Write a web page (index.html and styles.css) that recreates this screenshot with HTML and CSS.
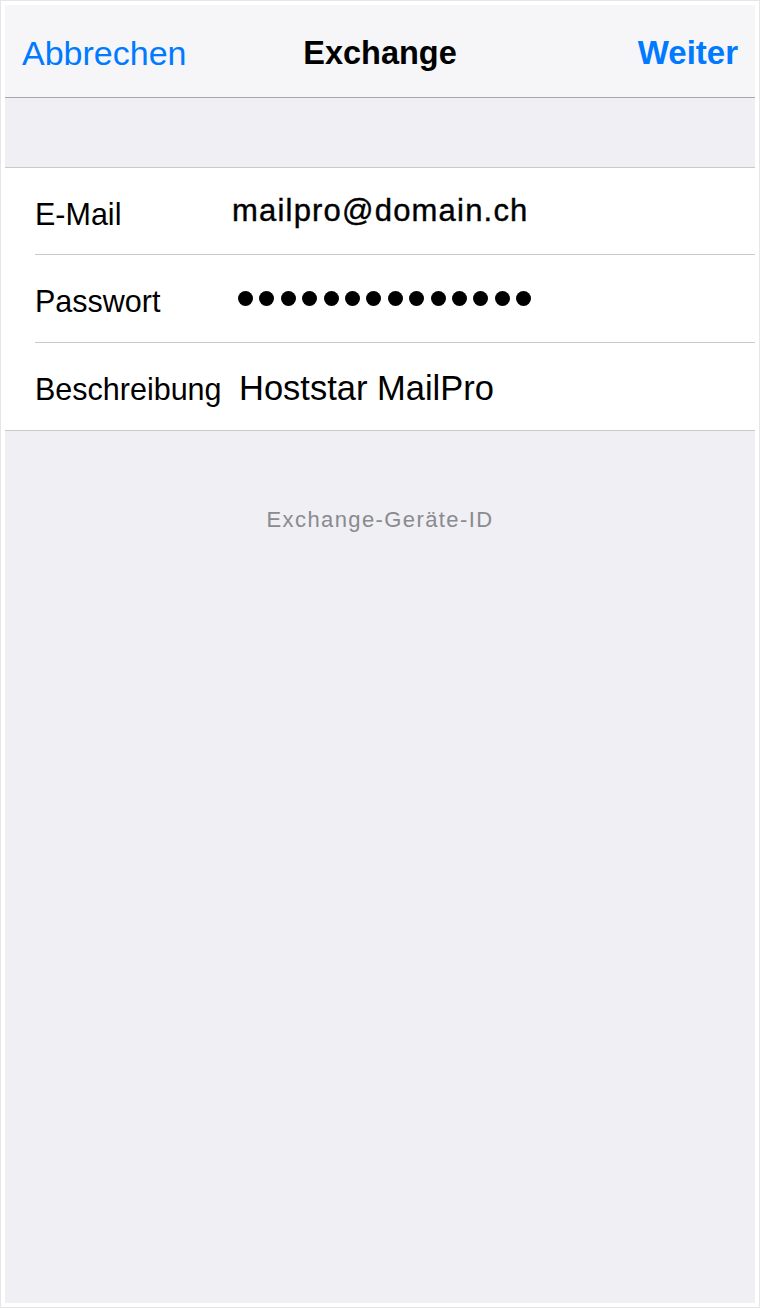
FILE: index.html
```html
<!DOCTYPE html>
<html lang="de">

<head>
    <meta charset="UTF-8">
    <meta name="viewport" content="width=device-width, initial-scale=1.0">
    <title>Exchange</title>
    <link rel="stylesheet" href="styles.css">
</head>

<body>

    <div class="frame">
        <div class="screen">

            <div class="navbar">
                <span class="nav-button">Abbrechen</span>
                <span class="nav-title">Exchange</span>
                <span class="nav-button nav-button-bold">Weiter</span>
            </div>

            <div class="spacer"></div>

            <div class="form">
                <div class="form-row">
                    <div class="form-row-inner">
                        <span class="label">E-Mail</span>
                        <span class="value value-mail">mailpro@domain.ch</span>
                    </div>
                </div>
                <div class="form-row">
                    <div class="form-row-inner">
                        <span class="label">Passwort</span>
                        <span class="value value-password">
                            <span class="dot"></span><span class="dot"></span><span class="dot"></span><span class="dot"></span><span class="dot"></span><span class="dot"></span><span class="dot"></span><span class="dot"></span><span class="dot"></span><span class="dot"></span><span class="dot"></span><span class="dot"></span><span class="dot"></span><span class="dot"></span>
                        </span>
                    </div>
                </div>
                <div class="form-row">
                    <div class="form-row-inner">
                        <span class="label">Beschreibung</span>
                        <span class="value value-large">Hoststar MailPro</span>
                    </div>
                </div>
            </div>

            <p class="footer-note">Exchange-Geräte-ID</p>

        </div>
    </div>

</body>

</html>
```

FILE: styles.css
```css
* {
    box-sizing: border-box;
}

body {
    font-family: 'Liberation Sans', Arial, sans-serif;
    margin: 0;
    padding: 0;
    background-color: #fff;
    color: #000;
}

.frame {
    width: 760px;
    height: 1308px;
    border: 1px solid #e6e6e6;
    padding: 4px;
    background-color: #fff;
}

.screen {
    height: 100%;
    background-color: #efeff4;
    display: flex;
    flex-direction: column;
}

/* top bar */
.navbar {
    height: 93px;
    padding: 4px 17px 0;
    background-color: #f6f6f8;
    border-bottom: 1px solid #a8a8ab;
    display: grid;
    grid-template-columns: 1fr auto 1fr;
    align-items: center;
}

.nav-button {
    font-size: 34px;
    color: #007aff;
}

.nav-button-bold {
    font-size: 33px;
    font-weight: 700;
    justify-self: end;
}

.nav-title {
    font-size: 32.5px;
    font-weight: 700;
    color: #000;
}

.spacer {
    height: 70px;
    border-bottom: 1px solid #c8c7cc;
}

/* form rows */
.form {
    background-color: #fff;
    border-bottom: 1px solid #c8c7cc;
    padding-left: 30px;
}

.form-row-inner {
    height: 88px;
    display: grid;
    grid-template-columns: 197px 1fr;
    align-items: center;
    border-bottom: 1px solid #c8c7cc;
}

.form-row:first-child .form-row-inner {
    height: 87px;
}

.form-row:last-child .form-row-inner {
    height: 87px;
    border-bottom: none;
}

.label {
    font-size: 30.5px;
    padding-top: 6px;
}

.value {
    font-size: 31px;
}

.value-mail {
    letter-spacing: 1.2px;
    -webkit-text-stroke: 0.4px #000;
}

.value-password {
    display: flex;
    gap: 6.4px;
    padding-left: 6px;
}

.dot {
    width: 15px;
    height: 15px;
    border-radius: 50%;
    background-color: #000;
}

.value-large {
    font-size: 34.5px;
    padding-top: 4px;
    padding-left: 7px;
}

.footer-note {
    margin: 76px 0 0;
    font-size: 22px;
    line-height: 26px;
    letter-spacing: 1.4px;
    text-align: center;
    color: #8a8a8f;
}
```
